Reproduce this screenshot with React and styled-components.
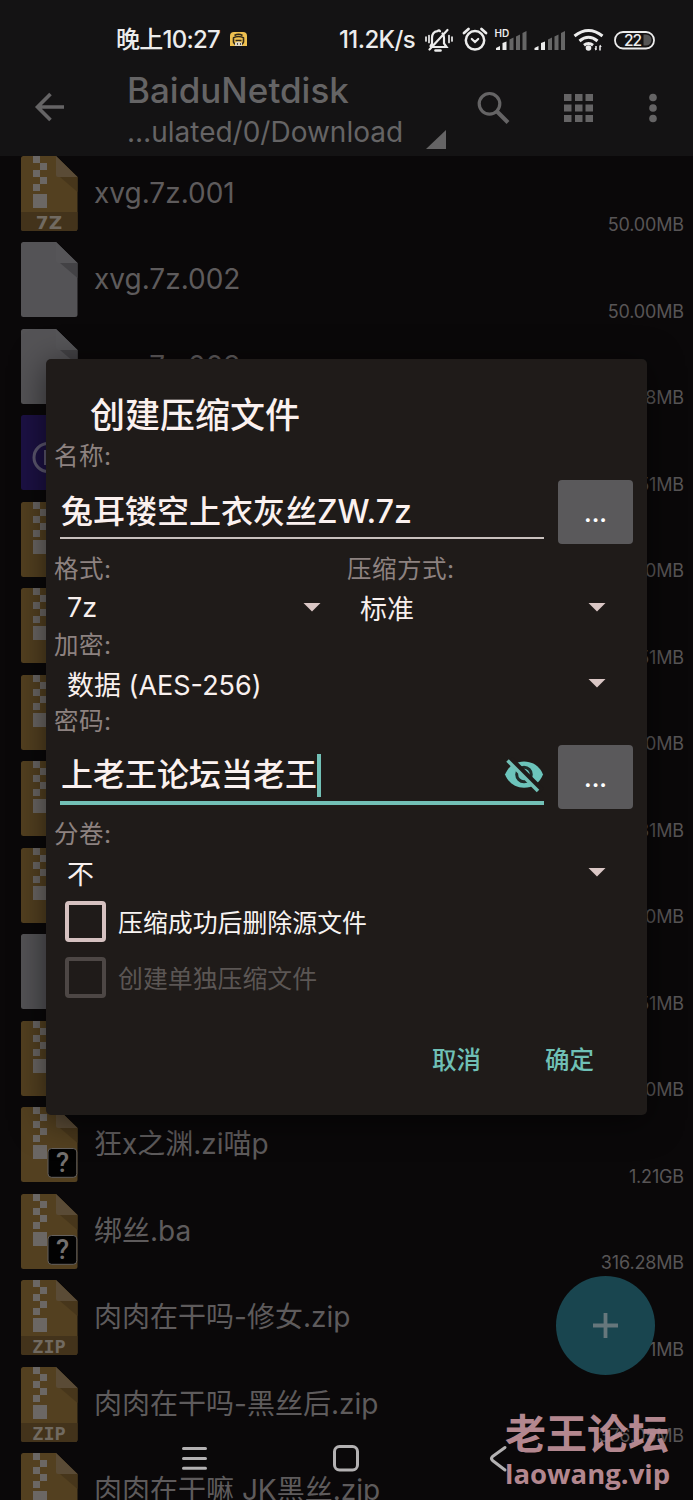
import React from "react";
import styled, { createGlobalStyle } from "styled-components";

const GlobalStyle = createGlobalStyle`
  * {
    box-sizing: border-box;
  }
  body {
    margin: 0;
    background: #0a0809;
    font-family: Inter, "Noto Sans CJK SC", sans-serif;
  }
`;

const Screen = styled.div`
  position: relative;
  display: flex;
  flex-direction: column;
  width: 693px;
  height: 1500px;
  overflow: hidden;
  background: #0a0809;
  svg {
    display: block;
    flex: none;
  }
`;

/* ---------- status bar ---------- */

const StatusBar = styled.div`
  display: flex;
  align-items: center;
  flex: none;
  height: 70px;
  padding: 10px 37px 0 116px;
  background: #141314;
  color: #ececec;
  font-size: 24px;
  line-height: 30px;
  font-weight: 500;
  white-space: nowrap;
`;
const Clock = styled.span`
  width: 114px;
  letter-spacing: -0.75px;
`;
const Speed = styled.span`
  width: 85px;
  margin-left: auto;
  letter-spacing: -0.6px;
`;

/* ---------- toolbar ---------- */

const Toolbar = styled.div`
  display: flex;
  flex: none;
  height: 86px;
  background: #141314;
  color: #656465;
  white-space: nowrap;
`;
const Back = styled.div`
  width: 127px;
  padding: 22px 0 0 34px;
`;
const Titles = styled.div`
  width: 291px;
`;
const Title = styled.div`
  height: 40px;
  font-size: 35px;
  line-height: 40px;
  font-weight: 500;
  letter-spacing: 0;
`;
const Path = styled.div`
  font-size: 28px;
  line-height: 44px;
  letter-spacing: 0;
`;
const Corner = styled.div`
  width: 20px;
  height: 19px;
  margin: 60px 0 0 8px;
  background: #656465;
  clip-path: polygon(100% 0, 100% 100%, 0 100%);
`;
const Tools = styled.div`
  display: flex;
  padding-top: 20px;
  margin-left: 31px;
`;

/* ---------- file list ---------- */

const List = styled.div`
  flex: 1;
  min-height: 0;
  overflow: hidden;
`;
const Row = styled.div`
  display: flex;
  height: 86.5px;
  padding: 0 9px 0 21px;
  &:first-child {
    margin-top: -0.5px;
  }
`;
const FileName = styled.div`
  flex: 1;
  margin-left: 16.5px;
  color: #5e5b5c;
  font-size: 28px;
  line-height: 75px;
  letter-spacing: ${(p) => p.$track || 0}px;
  white-space: nowrap;
`;
const FileSize = styled.div`
  align-self: flex-end;
  color: #585556;
  font-size: 18px;
  line-height: 34px;
  letter-spacing: -0.15px;
`;

/* ---------- dialog ---------- */

const Dialog = styled.div`
  position: absolute;
  left: 46px;
  top: 359px;
  display: flex;
  flex-direction: column;
  width: 601px;
  height: 756px;
  padding: 28px 14px 29px 8px;
  border-radius: 5px;
  background: #1f1b19;
  box-shadow: 0 6px 34px rgba(0, 0, 0, 0.55);
  white-space: nowrap;
`;
const DialogTitle = styled.div`
  padding-left: 36px;
  color: #fbf1ef;
  font-size: 35px;
  line-height: 56px;
  font-weight: 500;
`;
const Label = styled.div`
  height: 26px;
  color: #8d8280;
  font-size: 24.5px;
  line-height: 26px;
  letter-spacing: 0.5px;
`;
const Columns = styled.div`
  display: grid;
  grid-template-columns: 293px 1fr;
`;
const FieldRow = styled.div`
  display: flex;
  justify-content: space-between;
  height: 64px;
  margin: 11px 0 12px 6px;
`;
const Field = styled.div`
  display: flex;
  align-items: center;
  width: 484px;
  height: ${(p) => (p.$focused ? 60 : 59)}px;
  padding: ${(p) => (p.$focused ? "4px 0 0 1px" : "7px 0 0 1px")};
  border-bottom: ${(p) => (p.$focused ? "4px solid #72c0b6" : "2px solid #c9c1be")};
  color: #fbf1ef;
  font-size: 32px;
  line-height: 44px;
  font-weight: 500;
`;
const Caret = styled.span`
  width: 4px;
  height: 43px;
  margin-right: auto;
  background: #72c0b6;
`;
const MoreButton = styled.div`
  width: 75px;
  height: 64px;
  padding-top: 5px;
  border-radius: 4px;
  background: #5a595b;
  color: #fff;
  font-size: 24px;
  line-height: 58px;
  font-weight: 600;
  text-align: center;
`;
const Select = styled.div`
  display: flex;
  align-items: center;
  justify-content: space-between;
  height: 50px;
  padding: 0 ${(p) => p.$right || 27}px 0 13px;
  color: #f8f0ee;
  font-size: 27px;
  letter-spacing: ${(p) => p.$track || 0}px;
  &::after {
    content: "";
    width: 18px;
    height: 9px;
    background: #dac7c5;
    clip-path: polygon(0 0, 100% 0, 50% 100%);
  }
`;
const Checks = styled.div`
  display: grid;
  gap: 8px;
  padding-left: 11px;
`;
const Check = styled.div`
  display: flex;
  align-items: center;
  gap: 12px;
  height: 48px;
  color: ${(p) => (p.$disabled ? "#5b5654" : "#f8f4f2")};
  font-size: 24.9px;
  &::before {
    content: "";
    width: 33px;
    height: 33px;
    border: 4px solid ${(p) => (p.$disabled ? "#4d4745" : "#d5c1c0")};
    border-radius: 4px;
  }
`;
const Actions = styled.div`
  display: flex;
  justify-content: flex-end;
  gap: 64px;
  margin-top: auto;
  padding-right: 39px;
  color: #6fc0b6;
  font-size: 24.5px;
  line-height: 52px;
  font-weight: 500;
`;

/* ---------- things over the list ---------- */

const Fab = styled.div`
  position: absolute;
  left: 556px;
  top: 1276px;
  display: flex;
  align-items: center;
  justify-content: center;
  width: 99px;
  height: 99px;
  border-radius: 50%;
  background: #19454f;
`;
const NavBar = styled.div`
  position: absolute;
  left: 181px;
  top: 1444px;
`;
const Watermark = styled.div`
  position: absolute;
  left: 505px;
  top: 1409px;
  color: #be8f98;
  opacity: 0.94;
  font-weight: 700;
  white-space: nowrap;
`;
const MarkName = styled.div`
  font-size: 41px;
  line-height: 50px;
`;
const MarkSite = styled.div`
  font-family: "Open Sans", sans-serif;
  font-size: 27.5px;
  line-height: 30px;
`;

const cells = [
  [12, 0],
  [19, 7],
  [12, 14],
  [19, 21],
  [12, 28],
];

const FileIcon = ({ kind }) => {
  if (kind === "disc") {
    return (
      <svg width="56.5" height="75">
        <rect width="56.5" height="75" rx="2.5" fill="#1c1144" />
        <circle cx="27" cy="42.5" r="14" fill="none" stroke="#5d5870" strokeWidth="3" />
        <path d="M24.5 35v15" stroke="#5d5870" strokeWidth="3" />
      </svg>
    );
  }
  const blank = kind === "blank";
  const tag = kind === "7Z" || kind === "ZIP";
  return (
    <svg width="56.5" height="75">
      <path
        d="M2.5 0H35L56.5 21V72.5a2.5 2.5 0 0 1-2.5 2.5H2.5A2.5 2.5 0 0 1 0 72.5V2.5A2.5 2.5 0 0 1 2.5 0z"
        fill={blank ? "#545356" : "#534020"}
      />
      {tag && <path d="M0 56H56.5V72.5a2.5 2.5 0 0 1-2.5 2.5H2.5A2.5 2.5 0 0 1 0 72.5z" fill="#43331b" />}
      <path d="M39 21H56.5V36z" fill={blank ? "#434245" : "#47361b"} />
      <path d="M35 0L56.5 21H37a2 2 0 0 1-2-2z" fill={blank ? "#565558" : "#5a4b36"} />
      {!blank && (
        <g fill="#6b6764">
          {cells.map(([x, y]) => (
            <rect key={y} x={x} y={y} width="7" height="7" />
          ))}
          <rect x="12" y="38" width="14" height="14" />
        </g>
      )}
      {tag && (
        <text
          x="28"
          y="73"
          textAnchor="middle"
          fill="#716a61"
          fontFamily={kind === "ZIP" ? "DejaVu Sans Mono" : "DejaVu Sans"}
          fontSize="18.5"
          fontWeight="700"
        >
          {kind}
        </text>
      )}
      {kind === "unknown" && (
        <g>
          <rect x="27" y="41.5" width="28.8" height="28.8" rx="3.5" fill="#020202" stroke="#65615e" />
          <text x="41.5" y="65" textAnchor="middle" fill="#74706e" fontFamily="Roboto" fontSize="27" fontWeight="500">
            ?
          </text>
        </g>
      )}
    </svg>
  );
};

const files = [
  { kind: "7Z", name: "xvg.7z.001", size: "50.00MB" },
  { kind: "blank", name: "xvg.7z.002", size: "50.00MB" },
  { kind: "blank", name: "xvg.7z.003", size: "8MB" },
  { kind: "disc", size: "51MB" },
  { kind: "zip", size: "0MB" },
  { kind: "zip", size: "51MB" },
  { kind: "zip", size: "0MB" },
  { kind: "zip", size: "31MB" },
  { kind: "zip", size: "0MB" },
  { kind: "blank", size: "51MB" },
  { kind: "zip", size: "0MB" },
  { kind: "unknown", name: "狂x之渊.zi喵p", size: "1.21GB" },
  { kind: "unknown", name: "绑丝.ba", size: "316.28MB" },
  { kind: "ZIP", name: "肉肉在干吗-修女.zip", size: "1MB" },
  { kind: "ZIP", name: "肉肉在干吗-黑丝后.zip", size: "376.05MB" },
  { kind: "zip", name: "肉肉在干嘛 JK黑丝.zip" },
];

const AppBadge = () => (
  <svg width="17" height="16" viewBox="0 0 17 16">
    <path d="M4 0h9a4 4 0 0 1 4 4v10H0V4a4 4 0 0 1 4-4z" fill="#eec04f" />
    <path d="M4.5 3.5q4-2.5 8 0M3 6q5.500-3 11 0M3.500 6v4q1 3 5 3t5-3V6M5.500 8.500h6" fill="none" stroke="#30281a" strokeWidth="1.6" />
    <path d="M5 14v-3q3.500-3 7 0v3z" fill="#ddd6c4" />
    <path d="M7 12h1M10 12h1" stroke="#222" strokeWidth="1.300" />
  </svg>
);

const StatusIcons = () => (
  <svg width="232" height="28" viewBox="424 26 232 28">
    <g fill="none" stroke="#ececec" strokeWidth="2.2" strokeLinecap="round">
      <path d="M431.500 47h15l-2.500-3.500V38q0-3-1.500-4.500M440 31.200q-1-1.700-2.500 0Q432 32 432 38v5.500L430.500 46M429.500 49.500L447.500 30" />
      <path d="M426 37v4M429 35.500v7M449 35.500v7M452 37v4" strokeWidth="1.700" />
      <path d="M435.500 50.500h5" strokeWidth="2.600" />
      <circle cx="475" cy="40.300" r="9.200" strokeWidth="2.500" />
      <path d="M471.800 39l3.200 3 3.200-3" />
      <path d="M464 33l4.500-4M486 33l-4.500-4" strokeWidth="2.800" />
    </g>
    <text x="494.500" y="37" fill="#ececec" fontFamily="Inter" fontSize="10" fontWeight="600">
      HD
    </text>
    {[496, 534.5].map((x) => (
      <g key={x}>
        <path d={`M${x} 50v-2l4-2v4zM${x + 6.500} 50v-7l4-1.500v8.500z`} fill="#ececec" />
        <path
          d={`M${x + 13.500} 50v-10.500l4-2V50zM${x + 20} 50v-13.500l4-2V50zM${x + 26.500} 50V33l4-2v19z`}
          fill="#666"
        />
      </g>
    ))}
    <g fill="none" stroke="#ececec" strokeWidth="3">
      <path d="M574.500 36q14-11 28 0M579.500 41q9-7.500 18 0M584 45.200q4.500-3.500 9 0" />
    </g>
    <circle cx="588.500" cy="48" r="2.800" fill="#ececec" />
    <path d="M596 50v-4M600 45.500v5" stroke="#ececec" strokeWidth="1.500" />
    <path d="M594.500 48h1.500v3zM600 44.500l1.800 2.500H600z" fill="#ececec" />
    <path d="M643.500 34.500h2.500a5.500 5.500 0 0 1 0 11h-2.500z" fill="#555" />
    <rect x="615" y="32" width="39" height="16.500" rx="8" fill="none" stroke="#ececec" strokeWidth="1.800" />
    <text x="624" y="45.800" fill="#ececec" fontFamily="Inter" fontSize="15.500" fontWeight="500" letterSpacing="-1">
      22
    </text>
  </svg>
);

const ToolbarIcons = () => (
  <svg width="190" height="36" viewBox="478 89 190 36">
    <circle cx="490.500" cy="102.800" r="10.300" fill="none" stroke="#656465" strokeWidth="3.200" />
    <path d="M498 110.500l11 11" stroke="#656465" strokeWidth="4" />
    <g fill="#656465">
      {[93, 103.5, 114].map((y) =>
        [565, 576, 586.5].map((x) => <rect key={`${x}-${y}`} x={x} y={y} width="7.500" height="7" />)
      )}
      {[96.5, 107, 117.5].map((y) => (
        <circle key={y} cx="654" cy={y} r="3.800" />
      ))}
    </g>
  </svg>
);

const EyeOff = () => (
  <svg width="40" height="36" viewBox="503 758 40 36">
    <path
      d="M504 775.500C507.500 767 514.500 762.500 523 762.500S538.700 767 542 775.500C538.700 784 531.500 788.800 523 788.800S507.500 784 504 775.500z"
      fill="#6cc4bb"
    />
    <circle cx="523" cy="775.500" r="7.300" fill="#6cc4bb" stroke="#1f2b29" strokeWidth="3" />
    <path d="M509 760.500L540.500 792" stroke="#1f1b19" strokeWidth="7" />
    <path d="M506.500 761.500L537 792" stroke="#72c0b6" strokeWidth="3.500" />
  </svg>
);

export default function App() {
  return (
    <Screen>
      <GlobalStyle />
      <StatusBar>
        <Clock>晚上10:27</Clock>
        <AppBadge />
        <Speed>11.2K/s</Speed>
        <StatusIcons />
      </StatusBar>
      <Toolbar>
        <Back>
          <svg width="32" height="30" viewBox="0 0 32 30">
            <path d="M30 15H4M16.500 2L3.500 15l13 13" fill="none" stroke="#656465" strokeWidth="3.600" />
          </svg>
        </Back>
        <Titles>
          <Title>BaiduNetdisk</Title>
          <Path>…ulated/0/Download</Path>
        </Titles>
        <Corner />
        <Tools>
          <ToolbarIcons />
        </Tools>
      </Toolbar>

      <List>
        {files.map((file, i) => (
          <Row key={i}>
            <FileIcon kind={file.kind} />
            <FileName>{file.name}</FileName>
            <FileSize>{file.size}</FileSize>
          </Row>
        ))}
      </List>

      <Fab>
        <svg width="25" height="25">
          <path d="M12.500 0v25M0 12.500h25" stroke="#66777c" strokeWidth="3.800" />
        </svg>
      </Fab>

      <NavBar>
        <svg width="330" height="30" viewBox="181 1444 330 30">
          <g fill="none" stroke="#b3b1b2" strokeWidth="3" strokeLinecap="round" strokeLinejoin="round">
            <path d="M183.500 1448.500h22M183.500 1458.500h22M183.500 1468.300h22" />
            <rect x="334.500" y="1446.500" width="23" height="23.500" rx="5" />
            <path d="M505 1447.500l-12.500 9q-2 2 0 4l12.500 9.500" />
          </g>
        </svg>
      </NavBar>

      <Dialog>
        <DialogTitle>创建压缩文件</DialogTitle>
        <Label>名称:</Label>
        <FieldRow>
          <Field>兔耳镂空上衣灰丝ZW.7z</Field>
          <MoreButton>...</MoreButton>
        </FieldRow>
        <Columns>
          <div>
            <Label>格式:</Label>
            <Select $right={26}>7z</Select>
          </div>
          <div>
            <Label>压缩方式:</Label>
            <Select>标准</Select>
          </div>
        </Columns>
        <Label>加密:</Label>
        <Select>数据 (AES-256)</Select>
        <Label>密码:</Label>
        <FieldRow>
          <Field $focused>
            上老王论坛当老王
            <Caret />
            <EyeOff />
          </Field>
          <MoreButton>...</MoreButton>
        </FieldRow>
        <Label>分卷:</Label>
        <Select>不</Select>
        <Checks>
          <Check>压缩成功后删除源文件</Check>
          <Check $disabled>创建单独压缩文件</Check>
        </Checks>
        <Actions>
          <span>取消</span>
          <span>确定</span>
        </Actions>
      </Dialog>

      <Watermark>
        <MarkName>老王论坛</MarkName>
        <MarkSite>laowang.vip</MarkSite>
      </Watermark>
    </Screen>
  );
}
